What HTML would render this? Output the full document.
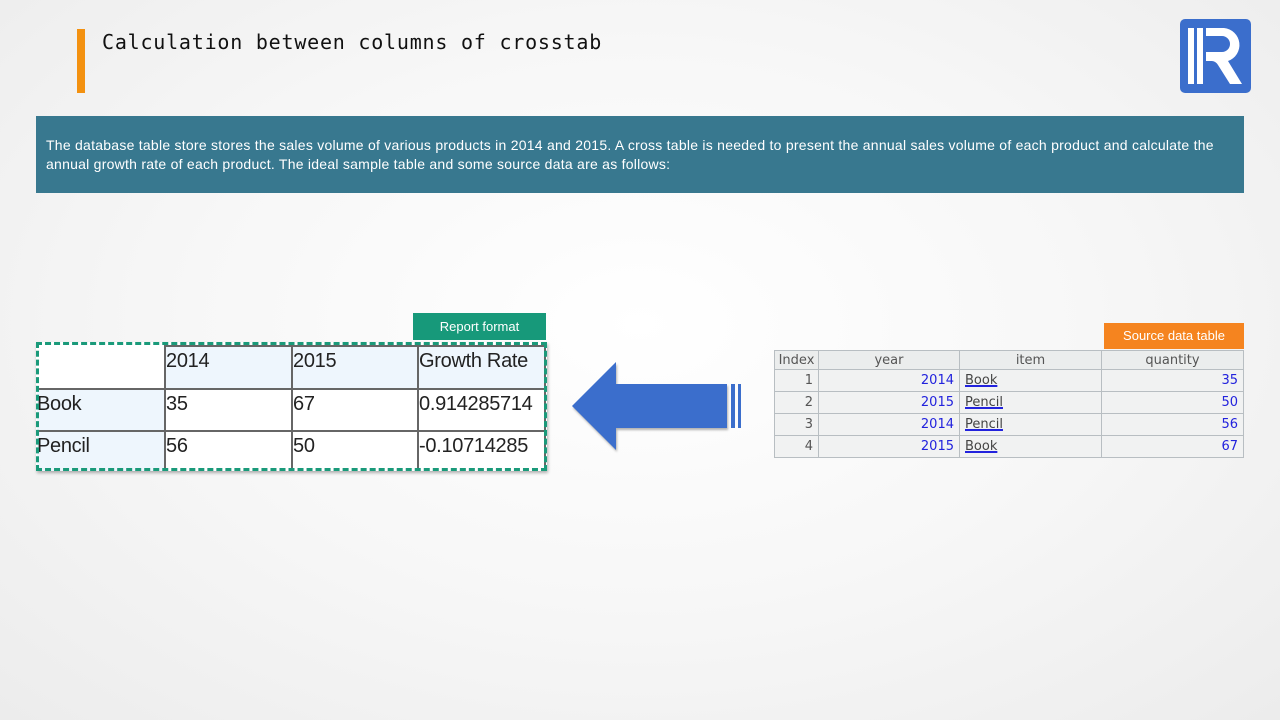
<!DOCTYPE html>
<html><head><meta charset="utf-8"><style>
*{margin:0;padding:0;box-sizing:border-box}
body{width:1280px;height:720px;overflow:hidden;position:relative;background:radial-gradient(ellipse at 50% 45%,#ffffff 0%,#f7f7f7 50%,#ececec 100%);font-family:"Liberation Sans",sans-serif}
.a{position:absolute}
.ct td{border:2px solid #666;font-size:20px;color:#222;vertical-align:top;padding:3px 0 0 0;line-height:22px;letter-spacing:-0.3px}
.st{border-collapse:collapse;font-family:"DejaVu Sans",sans-serif;font-size:13px}
.st td{border:1px solid #b8bec2;height:22px;padding:0 5px;background:#f1f2f2}
.st .h td{height:19px;text-align:center;color:#555;background:#ebeded}
.n{text-align:right;color:#2222dd}
.u{color:#444;text-decoration:underline;text-decoration-color:#2222dd;text-decoration-thickness:2px}
</style></head><body>
<div class="a" style="left:77px;top:29px;width:8px;height:64px;background:#f39110"></div>
<div class="a" style="left:102px;top:30px;font-family:'DejaVu Sans Mono','Liberation Mono',monospace;font-size:20px;letter-spacing:0.78px;color:#111">Calculation between columns of crosstab</div>
<svg class="a" style="left:1180px;top:19px" width="71" height="74" viewBox="0 0 71 74">
<rect width="71" height="74" rx="5" fill="#3b6ecc"/>
<rect x="8" y="9" width="6" height="56" fill="#fff"/>
<rect x="17" y="9" width="6" height="56" fill="#fff"/>
<path d="M26 9 H44 A17 17 0 0 1 48 42 L62 65 H50 L38 46 A8 8 0 0 0 32 42 H26 V33 H42 A8 8 0 0 0 42 17 H26 Z" fill="#fff"/>
</svg>
<div class="a" style="left:36px;top:116px;width:1208px;height:77px;background:#38788f;color:#fff;font-size:14px;line-height:19px;padding:20px 16px 0 10px;letter-spacing:0.25px">The database table store stores the sales volume of various products in 2014 and 2015. A cross table is needed to present the annual sales volume of each product and calculate the annual growth rate of each product. The ideal sample table and some source data are as follows:</div>
<div class="a" style="left:413px;top:313px;width:133px;height:27px;background:#17997a;color:#fff;font-size:13px;text-align:center;line-height:27px">Report format</div>
<div class="a" style="left:36px;top:342px;width:511px;height:129px;background:#fff;box-shadow:1px 2px 3px rgba(0,0,0,.3)"></div>
<table class="a ct" style="left:37px;top:345px;border-collapse:collapse;width:509px">
<tr style="height:43px"><td style="width:128px;border-top:none;border-left:none"></td><td style="width:127px;background:#eef6fd">2014</td><td style="width:126px;background:#eef6fd">2015</td><td style="background:#eef6fd">Growth Rate</td></tr>
<tr style="height:42px"><td style="background:#eef6fd;border-left:none">Book</td><td>35</td><td>67</td><td>0.914285714</td></tr>
<tr style="height:40px"><td style="background:#eef6fd;border-left:none;border-bottom:none">Pencil</td><td style="border-bottom:none">56</td><td style="border-bottom:none">50</td><td style="border-bottom:none">-0.10714285</td></tr>
</table>
<div class="a" style="left:36px;top:342px;width:511px;height:129px;border:3px dashed #1a9a7a"></div>
<svg class="a" style="left:570px;top:360px" width="175" height="94">
<path d="M2 46 L46 2 V24 H157 V68 H46 V90 Z" fill="#3b6ecc" style="filter:drop-shadow(1px 2px 1px rgba(0,0,0,.3))"/>
<rect x="161" y="24" width="4" height="44" fill="#3b6ecc"/>
<rect x="168" y="24" width="3" height="44" fill="#3b6ecc"/>
</svg>
<div class="a" style="left:1104px;top:323px;width:140px;height:26px;background:#f5841f;color:#fff;font-size:13px;text-align:center;line-height:26px">Source data table</div>
<table class="a st" style="left:774px;top:350px;width:470px">
<tr class="h"><td style="width:44px;padding:0 2px">Index</td><td style="width:141px">year</td><td style="width:142px">item</td><td>quantity</td></tr>
<tr><td style="text-align:right;color:#555">1</td><td class="n">2014</td><td><span class="u">Book</span></td><td class="n">35</td></tr>
<tr><td style="text-align:right;color:#555">2</td><td class="n">2015</td><td><span class="u">Pencil</span></td><td class="n">50</td></tr>
<tr><td style="text-align:right;color:#555">3</td><td class="n">2014</td><td><span class="u">Pencil</span></td><td class="n">56</td></tr>
<tr><td style="text-align:right;color:#555">4</td><td class="n">2015</td><td><span class="u">Book</span></td><td class="n">67</td></tr>
</table>
</body></html>
